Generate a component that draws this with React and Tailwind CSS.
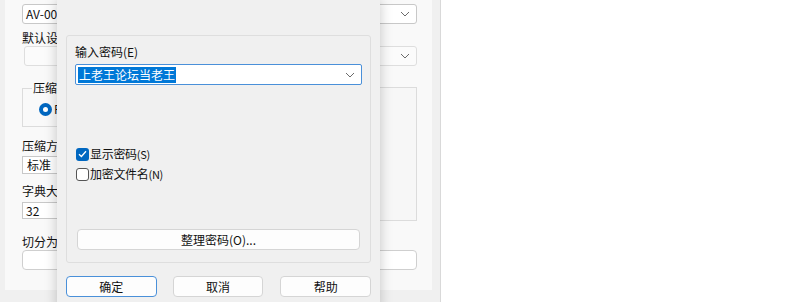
import React from 'react';

const font = { fontFamily: '"Microsoft YaHei UI", "Noto Sans CJK SC", "Liberation Sans", sans-serif' };

function Chevron({ className }) {
    return (
        <svg width="10" height="6" viewBox="0 0 10 6" className={className}>
            <path d="M1 1 L5 5 L9 1" fill="none" stroke="#6b6b6b" strokeWidth="1" />
        </svg>
    );
}

function Check() {
    return (
        <svg width="9" height="8" viewBox="0 0 9 8">
            <path d="M1 4.2 L3.4 6.5 L8 1.3" fill="none" stroke="#ffffff" strokeWidth="1.3" />
        </svg>
    );
}

const BackWindow = () => {
    return (
        <div className="w-[441px] h-[302px] bg-[#f0f0f0] border-r border-[#d9d9d9]">
            <div className="ml-[5px] w-[427px] h-[290px] bg-[#f9f9f9] pl-[17px] pr-[15px] pt-[4px] text-[12px] text-[#111]">
                <div className="h-[20px] bg-white border border-[#c8c8c8] rounded-[3px] flex items-center justify-between px-[3px]">
                    <span>AV-001.zip</span>
                    <Chevron className="mr-[3px]" />
                </div>
                <div className="mt-[6px] h-[16px] leading-[16px]">默认设置</div>
                <div className="ml-[2px] h-[20px] bg-[#fbfbfb] border border-[#dedede] rounded-[3px] flex items-center justify-end px-[3px]">
                    <Chevron className="mr-[3px]" />
                </div>
                <div className="mt-[22px] flex gap-[20px]">
                    <div className="w-[200px]">
                        <div className="h-[39px] border border-[#dcdcdc] relative">
                            <span className="absolute left-[9px] -top-[9px] bg-[#f9f9f9] px-[1px] leading-[16px]">压缩方式</span>
                            <div className="flex items-center gap-[2px] pl-[16px] pt-[11px]">
                                <span className="w-[13px] h-[13px] rounded-full bg-[#0067c0] flex items-center justify-center">
                                    <span className="w-[5px] h-[5px] rounded-full bg-white"></span>
                                </span>
                                <span>Fast</span>
                            </div>
                        </div>
                        <div className="mt-[11px] leading-[16px]">压缩方法</div>
                        <div className="mt-[2px] h-[18px] bg-white border border-[#c8c8c8] flex items-center px-[4px]">标准</div>
                        <div className="mt-[9px] leading-[16px]">字典大小</div>
                        <div className="mt-[3px] h-[17px] bg-white border border-[#c8c8c8] flex items-center px-[3px]">32</div>
                    </div>
                    <div className="flex-1 h-[134px] -mt-[1px] border border-[#dcdcdc] bg-[#f7f7f7]"></div>
                </div>
                <div className="mt-[13px] leading-[16px]">切分为卷</div>
                <div className="h-[20px] bg-white border border-[#cfcfcf] rounded-[4px]"></div>
            </div>
        </div>
    );
};

const Button = ({ label, focused, className }) => {
    return (
        <div className={`h-[21px] bg-[#fdfdfd] rounded-[4px] flex items-center justify-center ${focused ? 'border border-[#4a90d9]' : 'border border-[#d5d5d5]'} ${className || ''}`}>
            {label}
        </div>
    );
};

const PasswordDialog = () => {
    return (
        <div className="absolute left-[57px] top-0 w-[323px] h-[310px] bg-[#f0f0f0] shadow-[0_0_12px_rgba(0,0,0,0.22)] px-[9px] pt-[35px] text-[12px] text-[#111]">
            <div className="h-[228px] border border-[#dedede] rounded-[3px] bg-[#f0f0f0] px-[8px] pt-[8px]">
                <div className="leading-[16px]">输入密码(E)</div>
                <div className="mt-[4px] h-[21px] bg-white border border-[#4a90d9] rounded-[2px] flex items-center justify-between pl-[2px] pr-[6px]">
                    <span className="bg-[#0078d7] text-white leading-[16px] px-[1px]">上老王论坛当老王</span>
                    <Chevron />
                </div>
                <div className="mt-[61px] flex items-center gap-[1px] h-[16px]">
                    <span className="ml-[1px] w-[13px] h-[13px] rounded-[3px] bg-[#0067c0] flex items-center justify-center">
                        <Check />
                    </span>
                    <span className="tracking-[-0.3px]">显示密码<span className="text-[11px]">(S)</span></span>
                </div>
                <div className="mt-[4px] flex items-center gap-[1px] h-[16px]">
                    <span className="ml-[1px] w-[13px] h-[13px] rounded-[3px] border border-[#555] bg-white"></span>
                    <span className="tracking-[-0.3px]">加密文件名<span className="text-[11px]">(N)</span></span>
                </div>
                <Button label="整理密码(O)..." className="mt-[47px] mx-[2px] h-[20px]" />
            </div>
            <div className="mt-[13px] flex">
                <Button label="确定" focused className="w-[91px]" />
                <Button label="取消" className="w-[91px] ml-[16px]" />
                <Button label="帮助" className="w-[91px] ml-[17px]" />
            </div>
        </div>
    );
};

const App = () => {
    return (
        <div className="relative w-[800px] h-[302px] bg-white overflow-hidden" style={font}>
            <BackWindow />
            <PasswordDialog />
        </div>
    );
};

export default App;
